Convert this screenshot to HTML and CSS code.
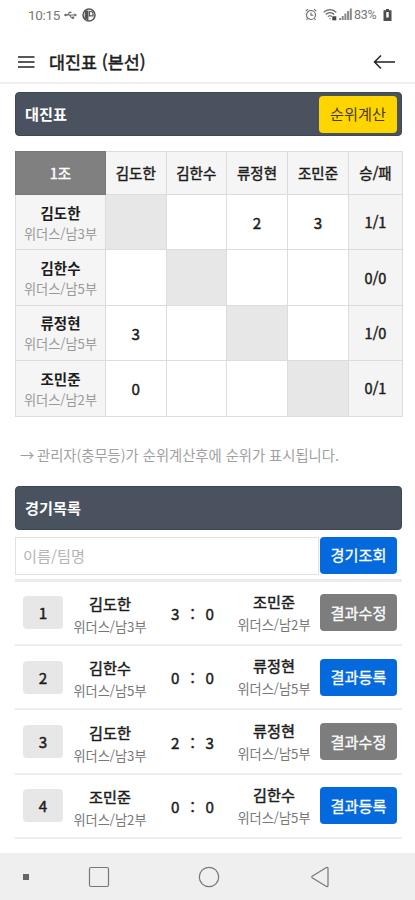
FILE: index.html
```html
<!DOCTYPE html>
<html lang="ko">
<head>
<meta charset="utf-8">
<meta name="viewport" content="width=device-width, initial-scale=1">
<title>대진표 (본선)</title>
<link rel="stylesheet" href="styles.css">
</head>
<body>
<div class="status">
  <span class="clock">10:15</span>
  <svg class="usb" width="13" height="10" viewBox="0 0 13 10" fill="none" stroke="#666" stroke-width="1.1"><path d="M1 5h10M3.5 5l2-2.6h2M5.5 5l2 2.8h1.5"/><path d="M10.5 3.2L13 5l-2.500 1.800z" fill="#666" stroke="none"/><circle cx="1.600" cy="5" r="1.300" fill="#666" stroke="none"/><circle cx="9" cy="7.800" r="1.200" fill="#666" stroke="none"/></svg>
  <svg class="app" width="14" height="14" viewBox="0 0 14 14"><circle cx="7" cy="7" r="6" fill="none" stroke="#555" stroke-width="1.500"/><path d="M3 2.500h3.500V12H5.500A6 6 0 0 1 2.500 10z" fill="#555"/><path d="M7.500 8.500V3.500h1.300a2.200 2.200 0 0 1 2.200 2.200V7.800H7.500" fill="none" stroke="#555" stroke-width="1.200"/></svg>
  <span class="fill"></span>
  <svg class="alarm" width="12" height="13" viewBox="0 0 12 13" fill="none" stroke="#666" stroke-width="1.100"><circle cx="6" cy="7" r="4.500"/><path d="M.7 3.200L3 1.200M11.300 3.200L9 1.200M6 4.500V7.200h2.200M2.600 10.500l-1 1.300M9.400 10.500l1 1.300"/></svg>
  <svg class="wifi" width="15" height="13" viewBox="0 0 15 13" fill="none" stroke="#666" stroke-width="1.200"><path d="M.7 4.300C4 .7 10 .7 13.300 4.300M2.800 6.500c2.300-2.500 6-2.500 8.400 0M4.900 8.700c1.200-1.300 3-1.300 4.200 0"/><path d="M6 10.200h2l-1 1.300z" fill="#666" stroke="none"/><path d="M9.300 8.300h4v4h-4z" fill="#444" stroke="none"/></svg>
  <svg class="signal" width="13" height="13" viewBox="0 0 13 13" fill="#888"><path d="M0 10h2v2H0zM2.700 8h2v4h-2zM5.400 5.500h2V12h-2zM8.100 3h2v9h-2zM10.800.5h2V12h-2z"/></svg>
  <span class="percent">83%</span>
  <svg class="battery" width="9" height="12" viewBox="0 0 9 12"><path d="M3 0h3v1.200h2.500V12H.5V1.200H3z" fill="#4d4d4d"/><path d="M3.300 3h2.400v5.500H3.300z" fill="#fff"/></svg>
</div>
<header class="appbar">
  <svg width="17" height="14" viewBox="0 0 17 14" stroke="#222" stroke-width="1.700"><path d="M0 2h16.500M0 7h16.500M0 12h16.500"/></svg>
  <h1>대진표 (본선)</h1>
  <svg width="23" height="16" viewBox="0 0 23 16" fill="none" stroke="#222" stroke-width="1.500"><path d="M22 8H1.500M8 1.500L1.500 8 8 14.500"/></svg>
</header>
<main>
  <section class="bar"><h2>대진표</h2><button class="btn yellow">순위계산</button></section>
  <table>
    <colgroup><col class="c-name"><col class="c-a"><col class="c-b"><col class="c-c"><col class="c-d"><col class="c-total"></colgroup>
    <thead><tr><th class="group">1조</th><th>김도한</th><th>김한수</th><th>류정현</th><th>조민준</th><th>승/패</th></tr></thead>
    <tbody>
      <tr><th><b>김도한</b><small>위더스/남3부</small></th><td class="self"></td><td></td><td>2</td><td>3</td><td class="total">1/1</td></tr>
      <tr><th><b>김한수</b><small>위더스/남5부</small></th><td></td><td class="self"></td><td></td><td></td><td class="total">0/0</td></tr>
      <tr><th><b>류정현</b><small>위더스/남5부</small></th><td>3</td><td></td><td class="self"></td><td></td><td class="total">1/0</td></tr>
      <tr><th><b>조민준</b><small>위더스/남2부</small></th><td>0</td><td></td><td></td><td class="self"></td><td class="total">0/1</td></tr>
    </tbody>
  </table>
  <p class="note"><span class="arrow">→</span>관리자(충무등)가 순위계산후에 순위가 표시됩니다.</p>
  <section class="bar"><h2>경기목록</h2></section>
  <form class="search"><input type="text" placeholder="이름/팀명"><button type="button" class="btn blue">경기조회</button></form>
  <ul class="matches">
    <li><span class="no">1</span><div class="player"><b>김도한</b><small>위더스/남3부</small></div><div class="score"><i>3</i><i>:</i><i>0</i></div><div class="player away"><b>조민준</b><small>위더스/남2부</small></div><button class="btn gray">결과수정</button></li>
    <li><span class="no">2</span><div class="player"><b>김한수</b><small>위더스/남5부</small></div><div class="score"><i>0</i><i>:</i><i>0</i></div><div class="player away"><b>류정현</b><small>위더스/남5부</small></div><button class="btn blue">결과등록</button></li>
    <li><span class="no">3</span><div class="player"><b>김도한</b><small>위더스/남3부</small></div><div class="score"><i>2</i><i>:</i><i>3</i></div><div class="player away"><b>류정현</b><small>위더스/남5부</small></div><button class="btn gray">결과수정</button></li>
    <li><span class="no">4</span><div class="player"><b>조민준</b><small>위더스/남2부</small></div><div class="score"><i>0</i><i>:</i><i>0</i></div><div class="player away"><b>김한수</b><small>위더스/남5부</small></div><button class="btn blue">결과등록</button></li>
  </ul>
</main>
<nav class="system">
  <span class="dot"></span>
  <svg class="recent" width="22" height="22" viewBox="0 0 22 22"><rect x="1.500" y="1.500" width="19" height="19" rx="1.500"/></svg>
  <svg class="home" width="22" height="22" viewBox="0 0 22 22"><circle cx="11" cy="11" r="9.700"/></svg>
  <svg class="back" width="20" height="22" viewBox="0 0 20 22"><path d="M16.500 1.500L2.500 10q-1.500 1 0 2l14 8.500q1.500.5 1.500-1V2.500q0-1.500-1.500-1z"/></svg>
</nav>
</body>
</html>
```

FILE: styles.css
```css
* { box-sizing: border-box; }
body {
  margin: 0;
  height: 900px;
  display: flex;
  flex-direction: column;
  overflow: hidden;
  background: #fff;
  color: #1c1c1c;
  font: 15.2px/20px "Noto Sans CJK KR", sans-serif;
}
h1, h2, p, ul { margin: 0; padding: 0; }
svg { display: block; flex: none; }
b, small { display: block; white-space: nowrap; }
small { font-size: 13.2px; font-weight: 400; }

.status {
  display: flex;
  align-items: center;
  height: 29px;
  padding: 0 23px 0 28px;
  color: #777;
  font: 14px/20px Roboto, sans-serif;
}
.clock { width: 36px; font-size: 13.500px; letter-spacing: -0.3px; }
.app { margin-left: 5px; }
.fill { flex: 1; }
.wifi { margin-left: 6px; }
.signal { margin-left: 1px; }
.percent { width: 25px; margin: 0 4px 0 2px; font-size: 12.500px; letter-spacing: -0.300px; }

.appbar {
  display: flex;
  align-items: center;
  height: 55px;
  padding: 13px 19px 1px 18px;
  border-bottom: 2px solid #efefef;
}
.appbar h1 {
  flex: 1;
  margin-left: 14px;
  font-size: 17.400px;
  font-weight: 400;
  -webkit-text-stroke: 0.5px;
}

main { flex: 1; padding: 8px 13px 0 15px; }
.bar {
  display: flex;
  align-items: center;
  justify-content: space-between;
  height: 44px;
  padding: 0 5px 2px 9px;
  border: 1px solid #3c4856;
  border-radius: 4px;
  background: #49525e;
  color: #fff;
}
.bar h2 { font-size: 15.200px; font-weight: 700; }
.btn {
  flex: none;
  width: 77px;
  height: 37px;
  padding: 0 0 2px;
  border: 0;
  border-radius: 4px;
  color: #fff;
  font: 15.200px/20px "Noto Sans CJK KR", sans-serif;
  -webkit-text-stroke: 0.3px;
}
.yellow { width: 78px; background: #ffd500; color: #453b16; -webkit-text-stroke: 0; }
.bar .btn { margin: 2px -1px 0 0; }
.blue { background: #0369dc; }
.gray { background: #7d7d7d; }

table {
  width: 388px;
  margin-top: 15px;
  border-collapse: collapse;
  table-layout: fixed;
  font-size: 14.500px;
  text-align: center;
}
.c-name { width: 90px; }
.c-a, .c-b { width: 60.500px; }
.c-c, .c-d { width: 61px; }
.c-total { width: 54px; }
th, td { padding: 0; border: 1px solid #dcdcdc; font-weight: 400; -webkit-text-stroke: 0.45px; }
th { background: #f5f5f5; }
thead tr { height: 43px; }
tbody tr { height: 55.400px; }
td { font-size: 15.200px; }
.group { background: #808080; color: #fff; border-color: #777; }
.self { background: #e7e7e7; }
.total { background: #f4f4f4; font-size: 14.500px; }
tbody th { padding-top: 2px; }
tbody th b { font-weight: 700; -webkit-text-stroke: 0; }
th small { color: #999; line-height: 21px; -webkit-text-stroke: 0; }

.note {
  display: flex;
  margin: 28px 0 21px 5px;
  color: #a0a0a0;
  font-size: 14.300px;
  white-space: nowrap;
}
.arrow { width: 17px; }

.search { display: flex; height: 45px; padding-top: 7px; gap: 1px; }
.search input {
  width: 304px;
  height: 38px;
  padding: 0 7px 1px;
  border: 1px solid #e2e2e2;
  outline: 0;
  font: 15.200px/20px "Noto Sans CJK KR", sans-serif;
}
.search input::placeholder { color: #b5b5b5; }

.matches { margin-top: 4px; border-top: 3px solid #ebebeb; list-style: none; }
.matches li {
  display: flex;
  align-items: center;
  height: 64.400px;
  padding-left: 8px;
  border-bottom: 2px solid #ededed;
}
.no {
  width: 40px;
  height: 33px;
  border-radius: 4px;
  background: #e7e7e7;
  line-height: 33px;
  text-align: center;
  -webkit-text-stroke: 0.45px;
}
.player { width: 76px; margin: 2px 0 0 9px; text-align: center; }
.player b { font-weight: 400; line-height: 26px; -webkit-text-stroke: 0.5px; }
.player small { color: #777; line-height: 22px; }
.away { margin: -2px 8px 0 0; }
.score { display: flex; justify-content: space-between; width: 43px; margin: 0 22px 0 23px; -webkit-text-stroke: 0.45px; }
.score i { font-style: normal; }

.system {
  display: flex;
  align-items: center;
  height: 47px;
  background: #efefef;
}
.system svg { fill: none; stroke: #777; stroke-width: 1.200; }
.dot { width: 6px; height: 6px; margin-left: 23px; background: #666; }
.recent { margin-left: 59px; }
.home { margin-left: 88px; }
.back { margin-left: 90px; }
```
